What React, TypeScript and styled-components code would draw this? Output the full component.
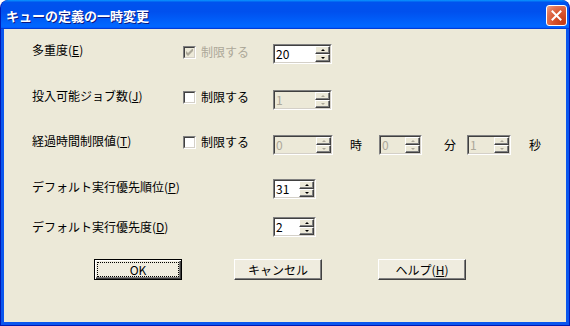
import React from "react";
import styled, { createGlobalStyle } from "styled-components";

const FONT = `"Noto Sans CJK JP", "Noto Sans", sans-serif`;

const GlobalStyle = createGlobalStyle`
  html, body {
    margin: 0;
    padding: 0;
    width: 570px;
    height: 326px;
    overflow: hidden;
    background: #ffffff;
  }
  body {
    font-family: ${FONT};
    font-size: 12px;
    line-height: 14px;
    color: #000;
  }
`;

const Window = styled.div`
  width: 570px;
  height: 326px;
  box-sizing: border-box;
  display: flex;
  flex-direction: column;
  padding: 0 1px 1px 1px;
  background: #0019b4;
  border-radius: 8px 8px 0 0;
  overflow: hidden;
`;

const TitleBar = styled.div`
  height: 29px;
  flex: none;
  box-sizing: border-box;
  display: flex;
  align-items: center;
  justify-content: space-between;
  padding: 2px 2px 0 5px;
  border-radius: 7px 7px 0 0;
  background: linear-gradient(
    180deg,
    #0997ff,
    #0053ee 8%,
    #0050ee 40%,
    #0066ff 88%,
    #0066ff 93%,
    #005bff 95%,
    #003dd7 96%,
    #003dd7
  );
`;

const Title = styled.span`
  color: #fff;
  font-weight: bold;
  font-size: 13px;
  line-height: 16px;
  text-shadow: 1px 1px #0a1883;
  letter-spacing: 0;
`;

const CloseButton = styled.div`
  width: 21px;
  height: 21px;
  box-sizing: border-box;
  border: 1px solid #fff;
  border-radius: 3px;
  background: radial-gradient(circle at 85% 85%, #c43a14 0%, #d8552f 45%, #e27657 75%, #f0a58c 100%);
  display: flex;
  align-items: center;
  justify-content: center;
`;

const Body = styled.div`
  flex: 1;
  background: #ece9d8;
  border: solid #0a56ee;
  border-width: 0 3px 3px 3px;
  padding: 14px 0 0 28px;
`;

const Row = styled.div<{ $mt: number }>`
  display: grid;
  grid-template-columns: 151px 90px auto;
  align-items: center;
  height: 20px;
  margin-top: ${(p) => p.$mt}px;
`;

const Label = styled.div<{ $lift: number }>`
  white-space: nowrap;
  margin-bottom: ${(p) => p.$lift * 2}px;
`;

const Key = styled.span`
  text-decoration: underline;
  text-underline-offset: 1px;
`;

const Check = styled.div<{ $lift: number; $disabled?: boolean }>`
  display: flex;
  align-items: center;
  gap: 5px;
  margin-bottom: ${(p) => p.$lift * 2}px;
  color: ${(p) => (p.$disabled ? "#aca899" : "#000")};
  white-space: nowrap;
`;

const Box = styled.span`
  width: 13px;
  height: 13px;
  box-sizing: border-box;
  display: flex;
  border: 1px solid;
  border-color: #808080 #fff #fff #808080;
`;

const BoxInner = styled.span<{ $disabled?: boolean }>`
  flex: 1;
  display: flex;
  align-items: center;
  justify-content: center;
  border: 1px solid;
  border-color: #404040 #d4d0c8 #d4d0c8 #404040;
  background: ${(p) => (p.$disabled ? "#ece9d8" : "#fff")};
`;

const Field = styled.div`
  grid-column: 3;
  display: flex;
  align-items: center;
`;

const Unit = styled.span<{ $ml: number; $mr?: number }>`
  margin-left: ${(p) => p.$ml}px;
  margin-right: ${(p) => p.$mr ?? 0}px;
  white-space: nowrap;
`;

const SpinFrame = styled.div<{ $w: number }>`
  width: ${(p) => p.$w}px;
  height: 20px;
  flex: none;
  box-sizing: border-box;
  display: flex;
  border: 1px solid;
  border-color: #808080 #fff #fff #808080;
`;

const SpinInner = styled.div<{ $disabled?: boolean }>`
  flex: 1;
  display: flex;
  border: 1px solid;
  border-color: #404040 #d4d0c8 #d4d0c8 #404040;
  background: ${(p) => (p.$disabled ? "#ece9d8" : "#fff")};
`;

const SpinText = styled.span<{ $disabled?: boolean }>`
  flex: 1;
  padding-left: 1px;
  line-height: 16px;
  color: ${(p) => (p.$disabled ? "#aca899" : "#000")};
`;

const SpinButtons = styled.div`
  width: 15px;
  display: flex;
  flex-direction: column;
`;

const SpinButton = styled.div`
  flex: 1;
  box-sizing: border-box;
  display: flex;
  align-items: center;
  justify-content: center;
  background: #ece9d8;
  border: 1px solid;
  border-color: #fff #404040 #404040 #fff;
  box-shadow: inset -1px -1px #808080;
`;

const Arrow = styled.span<{ $up?: boolean; $disabled?: boolean }>`
  width: 0;
  height: 0;
  border-left: 2px solid transparent;
  border-right: 2px solid transparent;
  ${(p) => (p.$up ? "border-bottom" : "border-top")}: 2px solid ${(p) => (p.$disabled ? "#aca899" : "#000")};
`;

const ButtonBar = styled.div`
  display: flex;
  margin-top: 22px;
  padding-left: 62px;
`;

const PushButton = styled.button<{ $default?: boolean; $ml?: number }>`
  width: 88px;
  height: 21px;
  margin: 0 0 0 ${(p) => p.$ml ?? 0}px;
  padding: 0;
  box-sizing: border-box;
  font-family: ${FONT};
  font-size: 12px;
  line-height: 14px;
  color: #000;
  background: #efecdf;
  border: 1px solid;
  border-color: ${(p) => (p.$default ? "#000" : "#fff #404040 #404040 #fff")};
  box-shadow: ${(p) =>
    p.$default
      ? "inset 1px 1px #fff, inset -1px -1px #404040, inset -2px -2px #808080"
      : "inset -1px -1px #808080"};
  outline: ${(p) => (p.$default ? "1px dotted #000" : "none")};
  outline-offset: -4px;
`;

type SpinProps = { value: string; width: number; disabled?: boolean };

const Spin = ({ value, width, disabled }: SpinProps) => (
  <SpinFrame $w={width}>
    <SpinInner $disabled={disabled}>
      <SpinText $disabled={disabled}>{value}</SpinText>
      <SpinButtons>
        <SpinButton>
          <Arrow $up $disabled={disabled} />
        </SpinButton>
        <SpinButton>
          <Arrow $disabled={disabled} />
        </SpinButton>
      </SpinButtons>
    </SpinInner>
  </SpinFrame>
);

type LimitProps = { checked?: boolean; disabled?: boolean; lift: number };

const Limit = ({ checked, disabled, lift }: LimitProps) => (
  <Check $lift={lift} $disabled={disabled}>
    <Box>
      <BoxInner $disabled={disabled}>
        {checked && (
          <svg width="7" height="7" viewBox="0 0 7 7">
            <path d="M0 2 L2 4 L6 0 L7 0 L7 2 L2 7 L0 5 Z" fill={disabled ? "#aca899" : "#000"} />
          </svg>
        )}
      </BoxInner>
    </Box>
    制限する
  </Check>
);

export default function App() {
  return (
    <>
      <GlobalStyle />
      <Window>
        <TitleBar>
          <Title>キューの定義の一時変更</Title>
          <CloseButton>
            <svg width="11" height="11" viewBox="0 0 11 11">
              <path d="M1.5 1.5 L9.5 9.5 M9.5 1.5 L1.5 9.5" stroke="#fff" strokeWidth="2" strokeLinecap="square" />
            </svg>
          </CloseButton>
        </TitleBar>
        <Body>
          <Row $mt={0}>
            <Label $lift={4}>
              多重度(<Key>E</Key>)
            </Label>
            <Limit checked disabled lift={2} />
            <Field>
              <Spin value="20" width={59} />
            </Field>
          </Row>
          <Row $mt={26}>
            <Label $lift={4}>
              投入可能ジョブ数(<Key>J</Key>)
            </Label>
            <Limit lift={3} />
            <Field>
              <Spin value="1" width={59} disabled />
            </Field>
          </Row>
          <Row $mt={25}>
            <Label $lift={4}>
              経過時間制限値(<Key>T</Key>)
            </Label>
            <Limit lift={3} />
            <Field>
              <Spin value="0" width={60} disabled />
              <Unit $ml={17} $mr={17}>時</Unit>
              <Spin value="0" width={43} disabled />
              <Unit $ml={22} $mr={11}>分</Unit>
              <Spin value="1" width={44} disabled />
              <Unit $ml={18}>秒</Unit>
            </Field>
          </Row>
          <Row $mt={25}>
            <Label $lift={2}>
              デフォルト実行優先順位(<Key>P</Key>)
            </Label>
            <Field>
              <Spin value="31" width={43} />
            </Field>
          </Row>
          <Row $mt={18}>
            <Label $lift={0}>
              デフォルト実行優先度(<Key>D</Key>)
            </Label>
            <Field>
              <Spin value="2" width={43} />
            </Field>
          </Row>
          <ButtonBar>
            <PushButton $default>OK</PushButton>
            <PushButton $ml={52}>キャンセル</PushButton>
            <PushButton $ml={56}>
              ヘルプ(<Key>H</Key>)
            </PushButton>
          </ButtonBar>
        </Body>
      </Window>
    </>
  );
}
